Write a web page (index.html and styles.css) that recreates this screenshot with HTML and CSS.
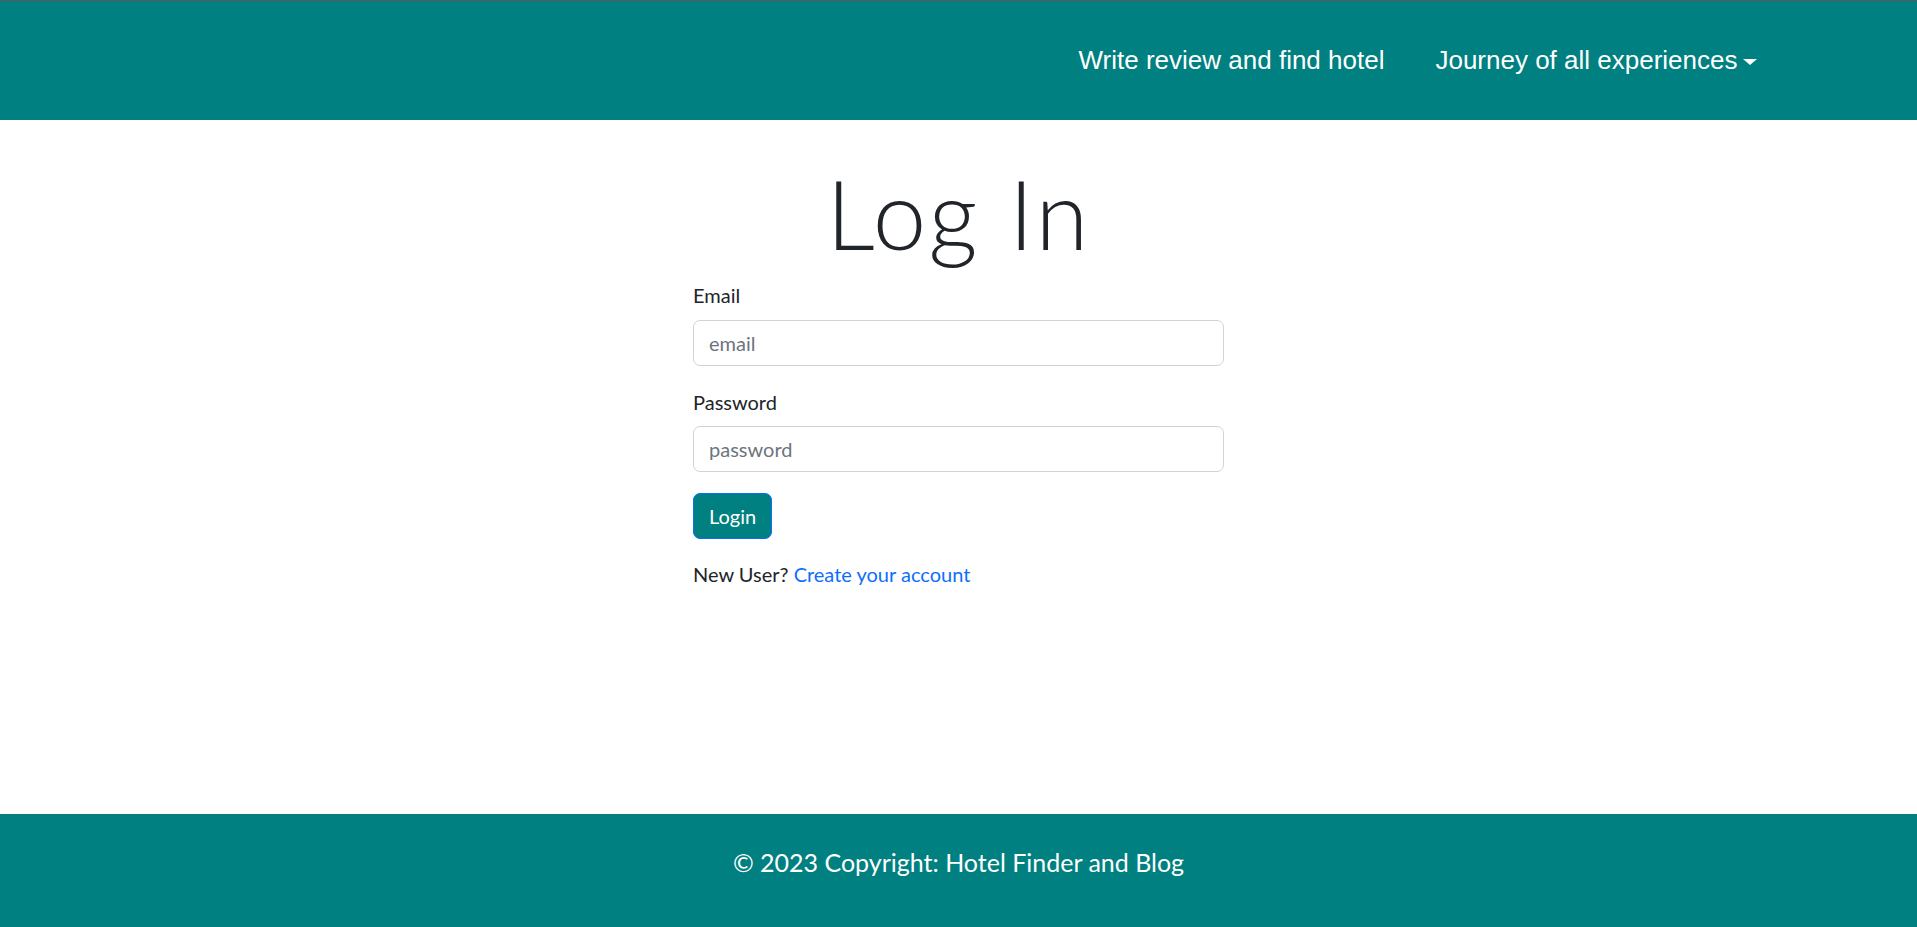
FILE: index.html
```html
<!DOCTYPE html>
<html lang="en">
<head>
<meta charset="utf-8">
<title>Log In</title>
<link rel="stylesheet" href="styles.css">
</head>
<body>
<div class="page">
  <header class="navbar">
    <nav class="nav">
      <a class="nav-link" href="#">Write review and find hotel</a>
      <a class="nav-link dropdown" href="#">Journey of all experiences<span class="caret"></span></a>
    </nav>
  </header>
  <main class="main">
    <div class="login">
      <h1 class="title">Log In</h1>
      <form class="form">
        <div class="field">
          <label class="label" for="email">Email</label>
          <input class="input" id="email" type="email" placeholder="email">
        </div>
        <div class="field">
          <label class="label" for="password">Password</label>
          <input class="input" id="password" type="password" placeholder="password">
        </div>
        <button class="btn" type="button">Login</button>
      </form>
      <p class="signup">New User? <a class="link" href="#">Create your account</a></p>
    </div>
  </main>
  <footer class="footer">© 2023 Copyright: Hotel Finder and Blog</footer>
</div>
</body>
</html>
```

FILE: styles.css
```css
* { box-sizing: border-box; }
html, body { margin: 0; padding: 0; }
body {
  font-family: "Lato", "Open Sans", sans-serif;
  font-size: 20px;
  line-height: 1.5;
  color: #212529;
  background: #fff;
}
.page {
  min-height: 100vh;
  display: flex;
  flex-direction: column;
}
.navbar {
  height: 120px;
  background: #008080;
  border-top: 1px solid #5a5a5a;
  display: flex;
  align-items: center;
  justify-content: flex-end;
  padding: 1px 135px 0 0;
}
.nav {
  display: flex;
  align-items: center;
}
.nav-link {
  font-family: "Liberation Sans", Arial, sans-serif;
  font-size: 26px;
  line-height: 1.2;
  color: #fff;
  text-decoration: none;
  padding: 0 25.5px;
  display: flex;
  align-items: center;
}
.caret {
  display: inline-block;
  width: 0;
  height: 0;
  margin-left: 5px;
  margin-top: 1px;
  border-top: 6px solid #fff;
  border-left: 7px solid transparent;
  border-right: 7px solid transparent;
}
.main {
  flex: 1;
  padding-top: 35px;
}
.login {
  width: 531px;
  margin: 0 auto;
}
.title {
  margin: 0 0 10px;
  font-size: 96px;
  font-weight: 300;
  line-height: 1.2;
  letter-spacing: 2.5px;
  text-align: center;
  color: #212529;
}
.form { margin: 0; }
.field { margin-bottom: 21px; }
.label {
  display: block;
  margin-bottom: 9.5px;
}
.input {
  display: block;
  width: 100%;
  height: 46px;
  padding: 7px 15px;
  font-family: inherit;
  font-size: 20px;
  line-height: 1.5;
  color: #212529;
  background: #fff;
  border: 1px solid #ced4da;
  border-radius: 7px;
  outline: none;
}
.input::placeholder { color: #6c757d; }
.btn {
  display: block;
  height: 46px;
  padding: 0 15px;
  font-family: inherit;
  font-size: 20px;
  line-height: 1.5;
  color: #fff;
  background: #008080;
  border: 1px solid #0d6efd;
  border-radius: 7px;
  cursor: pointer;
}
.signup {
  margin: 20px 0 0;
}
.link {
  color: #0d6efd;
  text-decoration: none;
}
.footer {
  height: 113px;
  padding-bottom: 15px;
  background: #008080;
  color: #fff;
  font-size: 25px;
  display: flex;
  align-items: center;
  justify-content: center;
}
```
